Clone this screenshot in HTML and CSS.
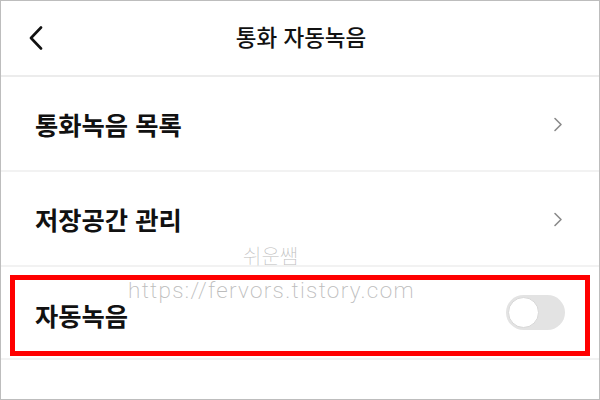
FILE: index.html
```html
<!DOCTYPE html>
<html lang="ko">
<head>
<meta charset="utf-8">
<link rel="stylesheet" href="styles.css">
</head>
<body>
<div class="screen">
  <header class="topbar">
    <svg class="back" width="16" height="24" viewBox="0 0 16 24"><path d="M13 1.5 L3 12 L13 22.5" fill="none" stroke="#111" stroke-width="2.6" stroke-linecap="round" stroke-linejoin="round"/></svg>
    <h1 class="title">통화 자동녹음</h1>
  </header>
  <div class="row">
    <span class="label">통화녹음 목록</span>
    <svg class="chev" width="10" height="15" viewBox="0 0 10 15"><path d="M2 1.5 L8 7.5 L2 13.5" fill="none" stroke="#8a8a8a" stroke-width="1.6" stroke-linecap="round" stroke-linejoin="round"/></svg>
  </div>
  <div class="row">
    <span class="label">저장공간 관리</span>
    <svg class="chev" width="10" height="15" viewBox="0 0 10 15"><path d="M2 1.5 L8 7.5 L2 13.5" fill="none" stroke="#8a8a8a" stroke-width="1.6" stroke-linecap="round" stroke-linejoin="round"/></svg>
  </div>
  <div class="row row-toggle">
    <span class="label">자동녹음</span>
    <span class="toggle"><span class="knob"></span></span>
  </div>
  <div class="wm wm-name">쉬운쌤</div>
  <div class="wm wm-url">https://fervors.tistory.com</div>
  <div class="highlight"></div>
</div>
</body>
</html>
```
FILE: styles.css
```css
* { box-sizing: border-box; }
html, body { margin: 0; padding: 0; background: #fff; }
.screen {
  position: relative;
  width: 600px;
  height: 400px;
  border: 1px solid #bdbdbd;
  background: #fff;
  font-family: "Noto Sans CJK KR", "Noto Sans", sans-serif;
  color: #111;
  overflow: hidden;
}
.topbar {
  position: relative;
  height: 76px;
  border-bottom: 2px solid #ececec;
  display: flex;
  align-items: center;
  justify-content: center;
}
.back { position: absolute; left: 27px; top: 25px; }
.title {
  margin: 0;
  font-size: 22.5px;
  font-weight: 500;
  margin-top: -5px;
  padding-left: 2px;
}
.row {
  height: 95px;
  border-bottom: 2px solid #f2f2f2;
  display: flex;
  align-items: center;
  justify-content: space-between;
  padding: 0 36px 0 34px;
}
.label {
  font-size: 25.3px;
  font-weight: 700;
}
.chev { margin-top: 2px; }
.row-toggle { height: 93px; padding-right: 34px; }
.row-toggle .label { margin-top: 4px; }
.toggle {
  width: 59px;
  height: 35px;
  border-radius: 18px;
  background: #e3e3e3;
  padding: 2px;
  display: flex;
  align-items: center;
}
.knob {
  width: 31px;
  height: 31px;
  border-radius: 50%;
  background: #fff;
  border: 1px solid #d8d8d8;
}
.wm {
  position: absolute;
  color: #c4c4c4;
}
.wm-name { left: 242px; top: 240px; font-size: 20px; font-weight: 100; font-family: "Noto Sans CJK KR", sans-serif; color: #bcbcbc; }
.wm-url { left: 127px; top: 276px; font-size: 22.5px; font-weight: 200; font-family: Roboto, "Noto Sans", sans-serif; letter-spacing: 1.3px; color: #bcbcbc; }
.highlight {
  position: absolute;
  left: 9px;
  top: 274px;
  width: 580px;
  height: 81px;
  border: 5px solid #ff0000;
}
```
